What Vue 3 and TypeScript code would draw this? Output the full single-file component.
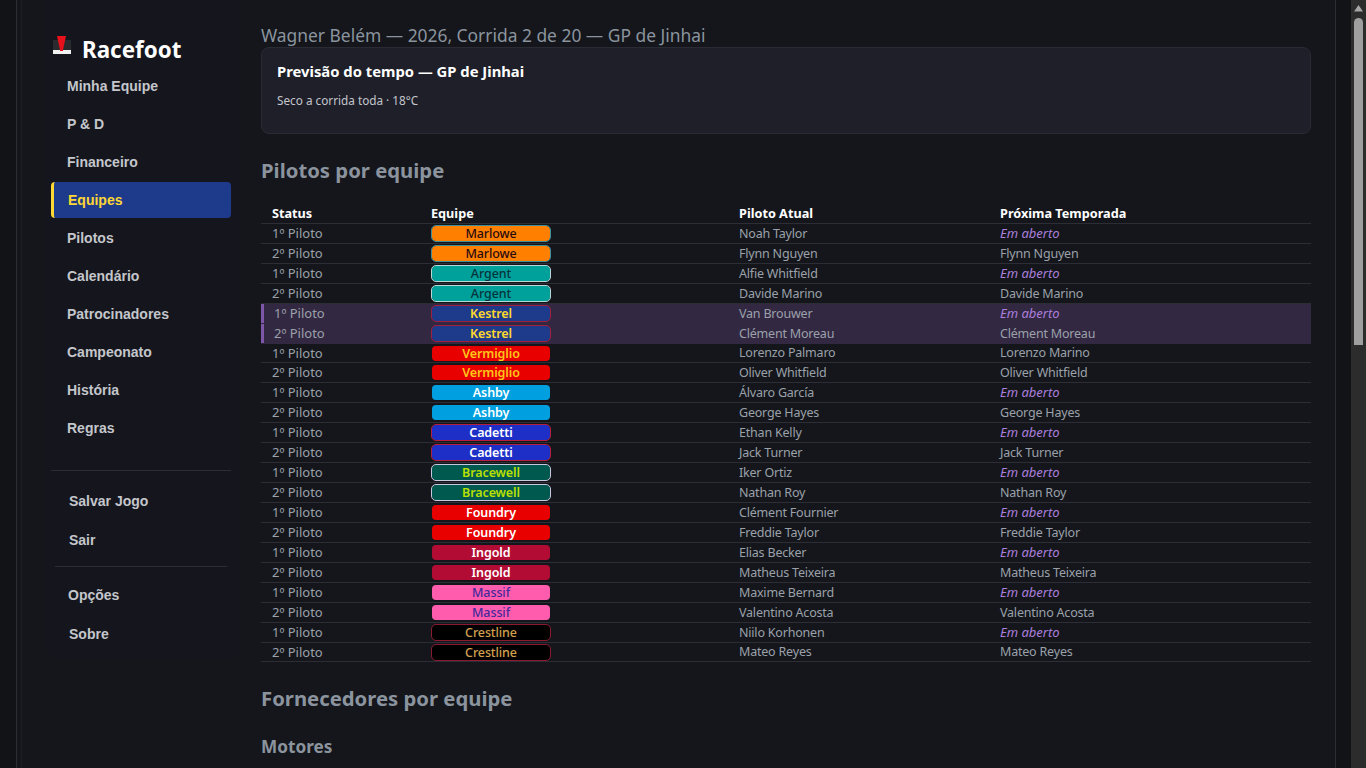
<script setup lang="ts">
interface Team {
  name: string
  cls: string
  first: string
  second: string
  nextSecond: string
  nextFirst?: string
}

const navMain = ['Minha Equipe', 'P & D', 'Financeiro', 'Equipes', 'Pilotos', 'Calendário', 'Patrocinadores', 'Campeonato', 'História', 'Regras']

const teams: Team[] = [
  { name: 'Marlowe', cls: 'marlowe', first: 'Noah Taylor', second: 'Flynn Nguyen', nextSecond: 'Flynn Nguyen' },
  { name: 'Argent', cls: 'argent', first: 'Alfie Whitfield', second: 'Davide Marino', nextSecond: 'Davide Marino' },
  { name: 'Kestrel', cls: 'kestrel', first: 'Van Brouwer', second: 'Clément Moreau', nextSecond: 'Clément Moreau' },
  { name: 'Vermiglio', cls: 'vermiglio', first: 'Lorenzo Palmaro', second: 'Oliver Whitfield', nextFirst: 'Lorenzo Marino', nextSecond: 'Oliver Whitfield' },
  { name: 'Ashby', cls: 'ashby', first: 'Álvaro García', second: 'George Hayes', nextSecond: 'George Hayes' },
  { name: 'Cadetti', cls: 'cadetti', first: 'Ethan Kelly', second: 'Jack Turner', nextSecond: 'Jack Turner' },
  { name: 'Bracewell', cls: 'bracewell', first: 'Iker Ortiz', second: 'Nathan Roy', nextSecond: 'Nathan Roy' },
  { name: 'Foundry', cls: 'foundry', first: 'Clément Fournier', second: 'Freddie Taylor', nextSecond: 'Freddie Taylor' },
  { name: 'Ingold', cls: 'ingold', first: 'Elias Becker', second: 'Matheus Teixeira', nextSecond: 'Matheus Teixeira' },
  { name: 'Massif', cls: 'massif', first: 'Maxime Bernard', second: 'Valentino Acosta', nextSecond: 'Valentino Acosta' },
  { name: 'Crestline', cls: 'crestline', first: 'Niilo Korhonen', second: 'Mateo Reyes', nextSecond: 'Mateo Reyes' },
]
</script>

<template>
  <div class="shell">
    <div class="page">
      <div class="frame">
        <div class="frame-inner">
          <aside class="sidebar">
            <div class="logo">
              <svg class="logo-icon" width="20" height="20" viewBox="0 0 20 20">
                <rect x="1" y="4" width="18" height="10" fill="#2b2b2f" />
                <path d="M5 0h9l-3 14H8z" fill="#e8101a" />
                <rect x="1" y="14" width="18" height="4" fill="#f2f2f2" />
                <rect x="8" y="14" width="3" height="1" fill="#e8101a" />
              </svg>
              <span>Racefoot</span>
            </div>
            <nav class="nav">
              <a v-for="item in navMain" :key="item" class="nav-item" :class="{ active: item === 'Equipes' }">{{ item }}</a>
            </nav>
            <hr class="rule rule-wide" />
            <nav class="nav-low">
              <a class="nav-item low">Salvar Jogo</a>
              <a class="nav-item low">Sair</a>
            </nav>
            <hr class="rule" />
            <nav class="nav-low last">
              <a class="nav-item low opt">Opções</a>
              <a class="nav-item low">Sobre</a>
            </nav>
          </aside>

          <main class="main">
            <h2 class="subtitle">Wagner Belém — 2026, Corrida 2 de 20 — GP de Jinhai</h2>
            <section class="card">
              <h3>Previsão do tempo — GP de Jinhai</h3>
              <p>Seco a corrida toda · 18°C</p>
            </section>

            <h2 class="section">Pilotos por equipe</h2>
            <table class="drivers">
              <colgroup>
                <col class="c1" /><col class="c2" /><col class="c3" /><col />
              </colgroup>
              <thead>
                <tr>
                  <th>Status</th>
                  <th class="team-col">Equipe</th>
                  <th>Piloto Atual</th>
                  <th>Próxima Temporada</th>
                </tr>
              </thead>
              <tbody>
                <template v-for="team in teams" :key="team.name">
                  <tr :class="{ mine: team.name === 'Kestrel' }">
                    <td>1º Piloto</td>
                    <td class="team-col"><span class="badge" :class="team.cls">{{ team.name }}</span></td>
                    <td class="name">{{ team.first }}</td>
                    <td v-if="team.nextFirst" class="name">{{ team.nextFirst }}</td>
                    <td v-else class="open">Em aberto</td>
                  </tr>
                  <tr :class="{ mine: team.name === 'Kestrel' }">
                    <td>2º Piloto</td>
                    <td class="team-col"><span class="badge" :class="team.cls">{{ team.name }}</span></td>
                    <td class="name">{{ team.second }}</td>
                    <td class="name">{{ team.nextSecond }}</td>
                  </tr>
                </template>
              </tbody>
            </table>

            <h2 class="section suppliers">Fornecedores por equipe</h2>
            <h3 class="sub-section">Motores</h3>
          </main>
        </div>
      </div>
    </div>

    <div class="scrollbar">
      <svg class="arrow" width="15" height="17" viewBox="0 0 15 17"><path d="M7.5 5L12 11.5H3z" fill="#a6a6a6" /></svg>
      <div class="thumb"></div>
    </div>
  </div>
</template>

<style>
html, body {
  margin: 0;
  height: 100%;
  overflow: hidden;
  background: #121317;
}
</style>

<style scoped>
.shell {
  display: flex;
  height: 768px;
  overflow: hidden;
  font-family: "Noto Sans", "Open Sans", sans-serif;
}

.page {
  flex: 1;
  min-width: 0;
  background: #121317;
  padding: 0 15px 0 16px;
}

.frame {
  height: 768px;
  box-sizing: border-box;
  padding-left: 4px;
  overflow: hidden;
  border-left: 1px solid #2c2d35;
  border-right: 1px solid #2c2d35;
  background: #14161b;
}

.frame-inner {
  display: flex;
  height: 768px;
  box-sizing: border-box;
  padding: 0 24px 0 24px;
  border-left: 1px solid #1c1d23;
}

.sidebar {
  width: 194px;
  height: 658px;
  box-sizing: border-box;
  flex: none;
  padding: 33px 9px 0 5px;
  margin-right: 21px;
  border-radius: 0 0 8px 8px;
  background: #15161d;
}

.logo {
  display: flex;
  align-items: center;
  gap: 10px;
  height: 32px;
  margin: 0 0 3px 1px;
  color: #fff;
  font-size: 22.4px;
  font-weight: 700;
}

.logo-icon {
  margin-bottom: 7px;
}

.nav-item {
  display: flex;
  align-items: center;
  height: 36px;
  margin-bottom: 2px;
  padding-left: 16px;
  border-radius: 4px;
  box-sizing: border-box;
  color: #c4c6cc;
  font-family: "Liberation Sans", Arial, sans-serif;
  font-size: 14px;
  font-weight: 700;
}

.nav-item.active {
  background: #1e3a8a;
  border-left: 3px solid #fdd835;
  padding-left: 14px;
  color: #fdd835;
}

.rule {
  height: 1px;
  margin: 0 4px;
  border: 0;
  background: #2c2d35;
}

.rule-wide {
  margin: 24px 0 11px;
}

.nav-low {
  margin-bottom: 8px;
}

.nav-low.last {
  margin-top: 9px;
}

.nav-item.low {
  height: 37px;
  padding-left: 18px;
  margin-bottom: 2px;
}

.nav-item.opt {
  padding-left: 17px;
}

.main {
  flex: 1;
  min-width: 0;
  padding-top: 24px;
}

.subtitle {
  margin: 0;
  height: 23px;
  color: #8b949e;
  font-size: 17.4px;
  font-weight: 400;
  line-height: 23px;
}

.card {
  height: 87px;
  box-sizing: border-box;
  padding: 13px 15px;
  background: #1e1f29;
  border: 1px solid #2a2b35;
  border-radius: 8px;
}

.card h3 {
  margin: 0 0 11px;
  color: #fff;
  font-size: 14.8px;
  font-weight: 700;
  line-height: 20px;
}

.card p {
  margin: 0;
  color: #c4c6cc;
  font-size: 11.75px;
  line-height: 16px;
}

.section {
  margin: 22px 0 20px;
  color: #8b949e;
  font-size: 20.3px;
  font-weight: 700;
  line-height: 28px;
}

.drivers {
  width: 100%;
  table-layout: fixed;
  border-collapse: collapse;
  font-size: 13px;
}

.c1 { width: 170px; }
.c2 { width: 297px; }
.c3 { width: 261px; }

.drivers th {
  height: 18px;
  padding: 0 0 1px 11px;
  border-bottom: 1px solid #2c2d35;
  color: #fff;
  font-size: 12.7px;
  font-weight: 700;
  text-align: left;
}

.drivers td {
  height: 19px;
  padding: 0 0 0 11px;
  border-bottom: 1px solid #2c2d35;
  color: #9ba1aa;
  line-height: 19px;
}

.drivers th.team-col,
.drivers td.team-col {
  padding-left: 0;
}

.drivers td.name {
  font-size: 12.5px;
  letter-spacing: -0.2px;
}

.drivers td.open {
  color: #ac7fdc;
  font-style: italic;
}

.drivers tr.mine td {
  background: #332842;
  border-bottom-color: #332842;
}

.drivers tr.mine td:first-child {
  box-shadow: inset 3px 0 0 #7e57a8;
  padding-left: 13px;
}

.drivers tr.mine + tr:not(.mine) td,
.drivers tbody tr:last-child td {
  height: 18px;
  line-height: 18px;
}

.badge {
  display: block;
  width: 120px;
  height: 17px;
  box-sizing: border-box;
  border: 1px solid transparent;
  border-radius: 5px;
  background-clip: padding-box;
  font-size: 12.5px;
  font-weight: 600;
  letter-spacing: -0.1px;
  line-height: 15px;
  text-align: center;
}

.marlowe { background-color: #ff8000; color: #2a0c10; border-color: #3f8f9a; font-weight: 500; }
.argent { background-color: #00a19b; color: #07343c; border-color: #b8d8d8; font-weight: 500; }
.kestrel { background-color: #1e3a8a; color: #ffd92e; border-color: #a0203f; }
.vermiglio { background-color: #e80000; color: #ffc61a; }
.ashby { background-color: #00a0e0; color: #fff; }
.cadetti { background-color: #1e2fc8; color: #fff; border-color: #b5203f; }
.bracewell { background-color: #00594f; color: #b8e000; border-color: #c8c8e0; }
.foundry { background-color: #e80000; color: #fff; }
.ingold { background-color: #b30c34; color: #fff; }
.massif { background-color: #ff5cae; color: #43289a; font-weight: 500; }
.crestline { background-color: #000; color: #d4a050; border-color: #8a1a30; font-weight: 500; }

.suppliers {
  margin: 22px 0 0;
}

.sub-section {
  margin: 24px 0 0;
  color: #8b949e;
  font-size: 17.2px;
  font-weight: 700;
  line-height: 22px;
}

.scrollbar {
  width: 15px;
  flex: none;
  background: #2c2c2c;
}

.arrow {
  display: block;
}

.thumb {
  width: 9px;
  height: 327px;
  margin: 1px 3px 0;
  border-radius: 5px 5px 0 0;
  background: #9f9f9f;
}
</style>
